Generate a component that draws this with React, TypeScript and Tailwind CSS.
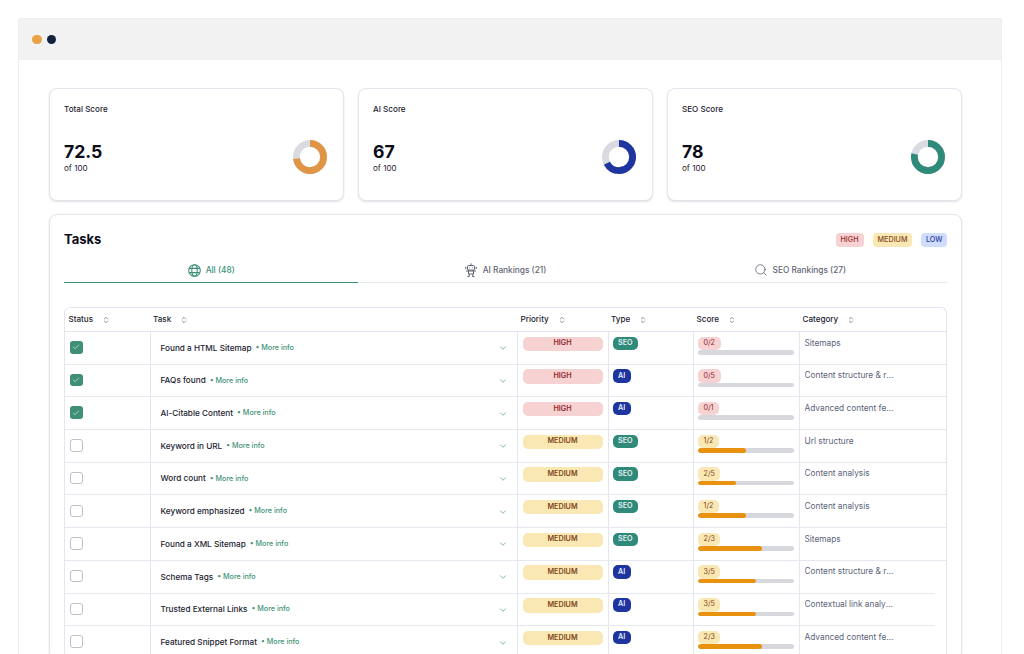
import { ChevronDown, ChevronsUpDown, Check, Search } from "lucide-react";

const rows = [
  { task: "Found a HTML Sitemap", done: true, p: "HIGH", t: "SEO", s: "0/2", pct: 0, c: "Sitemaps" },
  { task: "FAQs found", done: true, p: "HIGH", t: "AI", s: "0/5", pct: 0, c: "Content structure & readability" },
  { task: "AI-Citable Content", done: true, p: "HIGH", t: "AI", s: "0/1", pct: 0, c: "Advanced content features" },
  { task: "Keyword in URL", done: false, p: "MEDIUM", t: "SEO", s: "1/2", pct: 50, c: "Url structure" },
  { task: "Word count", done: false, p: "MEDIUM", t: "SEO", s: "2/5", pct: 40, c: "Content analysis" },
  { task: "Keyword emphasized", done: false, p: "MEDIUM", t: "SEO", s: "1/2", pct: 50, c: "Content analysis" },
  { task: "Found a XML Sitemap", done: false, p: "MEDIUM", t: "SEO", s: "2/3", pct: 66.6, c: "Sitemaps" },
  { task: "Schema Tags", done: false, p: "MEDIUM", t: "AI", s: "3/5", pct: 60, c: "Content structure & readability" },
  { task: "Trusted External Links", done: false, p: "MEDIUM", t: "AI", s: "3/5", pct: 60, c: "Contextual link analysis" },
  { task: "Featured Snippet Format", done: false, p: "MEDIUM", t: "AI", s: "2/3", pct: 66.6, c: "Advanced content features" },
];

function Donut({ pct, color }: { pct: number; color: string }) {
  const r = 13.6;
  const len = 2 * Math.PI * r;
  return (
    <svg width="34" height="34" viewBox="0 0 34 34" className="shrink-0">
      <circle cx="17" cy="17" r={r} fill="none" stroke="#d9dbe0" strokeWidth="6.8" />
      <circle
        cx="17"
        cy="17"
        r={r}
        fill="none"
        stroke={color}
        strokeWidth="6.8"
        strokeDasharray={`${(len * pct) / 100} ${len}`}
        transform="rotate(-90 17 17)"
      />
    </svg>
  );
}

function ScoreCard({ label, value, pct, color }: { label: string; value: string; pct: number; color: string }) {
  return (
    <div className="h-[113px] rounded-[8px] border border-[#e4e5ec] bg-white px-[14px] pt-[14px] shadow-[0_1px_2px_rgba(30,35,60,0.14)]">
      <div className="text-[8.1px] leading-[12px] font-medium text-[#1c2230]">{label}</div>
      <div className="mt-[25px] flex items-center justify-between pr-[2px]">
        <div>
          <div className="text-[17.6px] leading-[24px] font-bold text-[#0b0d1a]">{value}</div>
          <div className="-mt-[1px] text-[8.1px] leading-[11px] text-[#1c2230]">of 100</div>
        </div>
        <Donut pct={pct} color={color} />
      </div>
    </div>
  );
}

function GlobeIcon() {
  return (
    <svg width="13" height="13" viewBox="0 0 13 13" fill="none" stroke="#3a8f77" strokeWidth="1.1" className="shrink-0">
      <circle cx="6.5" cy="6.5" r="5.8" />
      <ellipse cx="6.5" cy="6.5" rx="2.7" ry="5.8" />
      <path d="M1.2 4.4h10.6M1.2 8.6h10.6" />
    </svg>
  );
}

function RobotIcon() {
  return (
    <svg width="12" height="14" viewBox="0 0 12 14" fill="none" stroke="#5f6675" strokeWidth="1" className="shrink-0">
      <rect x="2.5" y="2.5" width="7" height="4.5" rx="1" />
      <path d="M6 0.4v2.1M0.8 3.8v2.4M11.2 3.8v2.4M1 8h10M3.5 7v4h5V7M4.2 11v2.6M7.8 11v2.6M2.6 13.5h2M7.4 13.5h2" />
      <path d="M4.4 4.7h.7M6.9 4.7h.7" />
    </svg>
  );
}

function HeadCell({ label, w }: { label: string; w: string }) {
  return (
    <div className={`${w} flex items-center pl-[3.5px] text-[8.1px] font-medium text-[#1c2230]`}>
      <span>{label}</span>
      <ChevronsUpDown size={8} strokeWidth={1.8} className="ml-[9px] text-[#3c4352]" />
    </div>
  );
}

export default function App() {
  return (
    <div className="h-[654px] overflow-hidden bg-white pl-[18px] pr-[22px] pt-[18px] font-['Inter',sans-serif]">
      <div className="h-[700px] rounded-t-[2px] border-x border-t border-[#eceef2] bg-white">
        <div className="flex h-[41px] items-center gap-[5px] bg-[#f2f2f2] pl-[13px]">
          <span className="size-[9.5px] rounded-full bg-[#e9a248]" />
          <span className="size-[9.5px] rounded-full bg-[#13233f]" />
        </div>
        <div className="pl-[30px] pr-[39px] pt-[28px]">
          <div className="grid grid-cols-3 gap-[14px]">
            <ScoreCard label="Total Score" value="72.5" pct={72.5} color="#e09546" />
            <ScoreCard label="AI Score" value="67" pct={67} color="#1e35a0" />
            <ScoreCard label="SEO Score" value="78" pct={78} color="#2f8a7a" />
          </div>
          <div className="mt-[13px] rounded-[8px] border border-[#e4e5ec] bg-white px-[14px] pt-[15px] shadow-[0_1px_2px_rgba(30,35,60,0.14)]">
            <div className="flex h-[20px] items-center justify-between">
              <h2 className="text-[13px] font-bold text-[#0b0d1a]">Tasks</h2>
              <div className="flex items-center gap-[9.5px] text-[7.2px] font-medium">
                <span className="flex h-[14px] items-center rounded-[4px] bg-[#f6d2d2] px-[5px] text-[#93262b]">HIGH</span>
                <span className="flex h-[14px] items-center rounded-[4px] bg-[#f9e8b4] px-[4.5px] text-[#83461a]">MEDIUM</span>
                <span className="flex h-[14px] items-center rounded-[4px] bg-[#cfdcfa] px-[4.5px] text-[#2438a0]">LOW</span>
              </div>
            </div>
            <div className="mt-[8px] grid grid-cols-3 border-b border-[#e5e7eb] text-[8.3px] font-medium text-[#5f6675]">
              <div className="-mb-px flex h-[25px] flex-col text-[#3a8f77]">
                <div className="flex flex-1 items-center justify-center gap-[5px] pt-[1px]">
                  <GlobeIcon />
                  <span>All (48)</span>
                </div>
                <div className="h-[1.5px] bg-[#3a8f77]" />
              </div>
              <div className="flex h-[24px] items-center justify-center gap-[6px]">
                <RobotIcon />
                <span>AI Rankings (21)</span>
              </div>
              <div className="flex h-[24px] items-center justify-center gap-[5px]">
                <Search size={14} strokeWidth={1.4} />
                <span>SEO Rankings (27)</span>
              </div>
            </div>
            <div className="mt-[24px] overflow-hidden rounded-t-[6px] border-x border-t border-[#e3e6ef]">
              <div className="flex h-[24px] border-b border-[#e3e6ef]">
                <HeadCell label="Status" w="w-[84.5px]" />
                <HeadCell label="Task" w="w-[367.5px]" />
                <HeadCell label="Priority" w="w-[90.5px]" />
                <HeadCell label="Type" w="w-[85.5px]" />
                <HeadCell label="Score" w="w-[106px]" />
                <HeadCell label="Category" w="flex-1" />
              </div>
              {rows.map((r, i) => {
                const short = i === 7 || i === 8;
                const bottom = short ? "border-b border-b-[#e6e8f0]" : "";
                return (
                  <div key={r.task} className={`flex h-[32.7px] ${short ? "" : "border-b border-[#e6e8f0]"}`}>
                    <div className={`flex w-[84.5px] items-center pl-[5px] ${bottom}`}>
                      {r.done ? (
                        <span className="mb-[1px] flex size-[12.5px] items-center justify-center rounded-[3px] bg-[#3f8f78]">
                          <Check size={8} strokeWidth={2} className="text-white/85" />
                        </span>
                      ) : (
                        <span className="mb-[1px] size-[12.5px] rounded-[3px] border border-[#bcc0ca] bg-white" />
                      )}
                    </div>
                    <div className={`flex w-[367.5px] items-center border-l border-l-[#e3e6ef] pl-[10px] pr-[9px] ${bottom}`}>
                      <span className="text-[8.2px] font-medium text-[#1c2230]">{r.task}</span>
                      <span className="ml-[4px] mt-[1px] text-[7.2px] font-medium text-[#3f9278]">• More info</span>
                      <ChevronDown size={10} strokeWidth={1.6} className="ml-auto mt-[1px] text-[#3f9278]" />
                    </div>
                    <div className={`w-[90.5px] border-l border-l-[#e3e6ef] pl-[4.5px] pt-[4.5px] ${bottom}`}>
                      <div
                        className={`flex h-[14.5px] w-[80px] items-center justify-center rounded-[5px] text-[7.2px] font-semibold ${
                          r.p === "HIGH" ? "bg-[#f6d2d2] text-[#93262b]" : "bg-[#f9e8b4] text-[#83461a]"
                        }`}
                      >
                        {r.p}
                      </div>
                    </div>
                    <div className={`w-[85.5px] border-l border-l-[#e3e6ef] pl-[4px] pt-[4.5px] ${bottom}`}>
                      <span
                        className={`flex h-[13.5px] w-fit items-center rounded-[5px] px-[5.5px] text-[7.2px] font-semibold text-[#e6edf5] ${
                          r.t === "SEO" ? "bg-[#2f8a7a]" : "bg-[#1e35a0]"
                        }`}
                      >
                        {r.t}
                      </span>
                    </div>
                    <div className={`w-[106px] border-l border-l-[#e3e6ef] pl-[4px] pt-[4.5px] ${bottom}`}>
                      <span
                        className={`flex h-[13.5px] w-fit items-center rounded-[5px] px-[5.5px] text-[7.2px] font-normal ${
                          r.pct === 0 ? "bg-[#f6d2d2] text-[#93262b]" : "bg-[#f9e8b4] text-[#83461a]"
                        }`}
                      >
                        {r.s}
                      </span>
                      <div className="h-[4.5px] w-[96px] overflow-hidden rounded-full bg-[#d6d8de]">
                        <div className="h-full rounded-full bg-[#e8920f]" style={{ width: `${r.pct}%` }} />
                      </div>
                    </div>
                    <div className="flex-1 border-l border-l-[#e3e6ef]">
                      <div className={`h-full pl-[4.5px] pt-[4.5px] ${short ? "mr-[11px] border-b border-b-[#e6e8f0]" : ""}`}>
                        <div className="w-[89px] truncate text-[8.3px] leading-[12px] text-[#5b6478]">{r.c}</div>
                      </div>
                    </div>
                  </div>
                );
              })}
            </div>
          </div>
        </div>
      </div>
    </div>
  );
}
